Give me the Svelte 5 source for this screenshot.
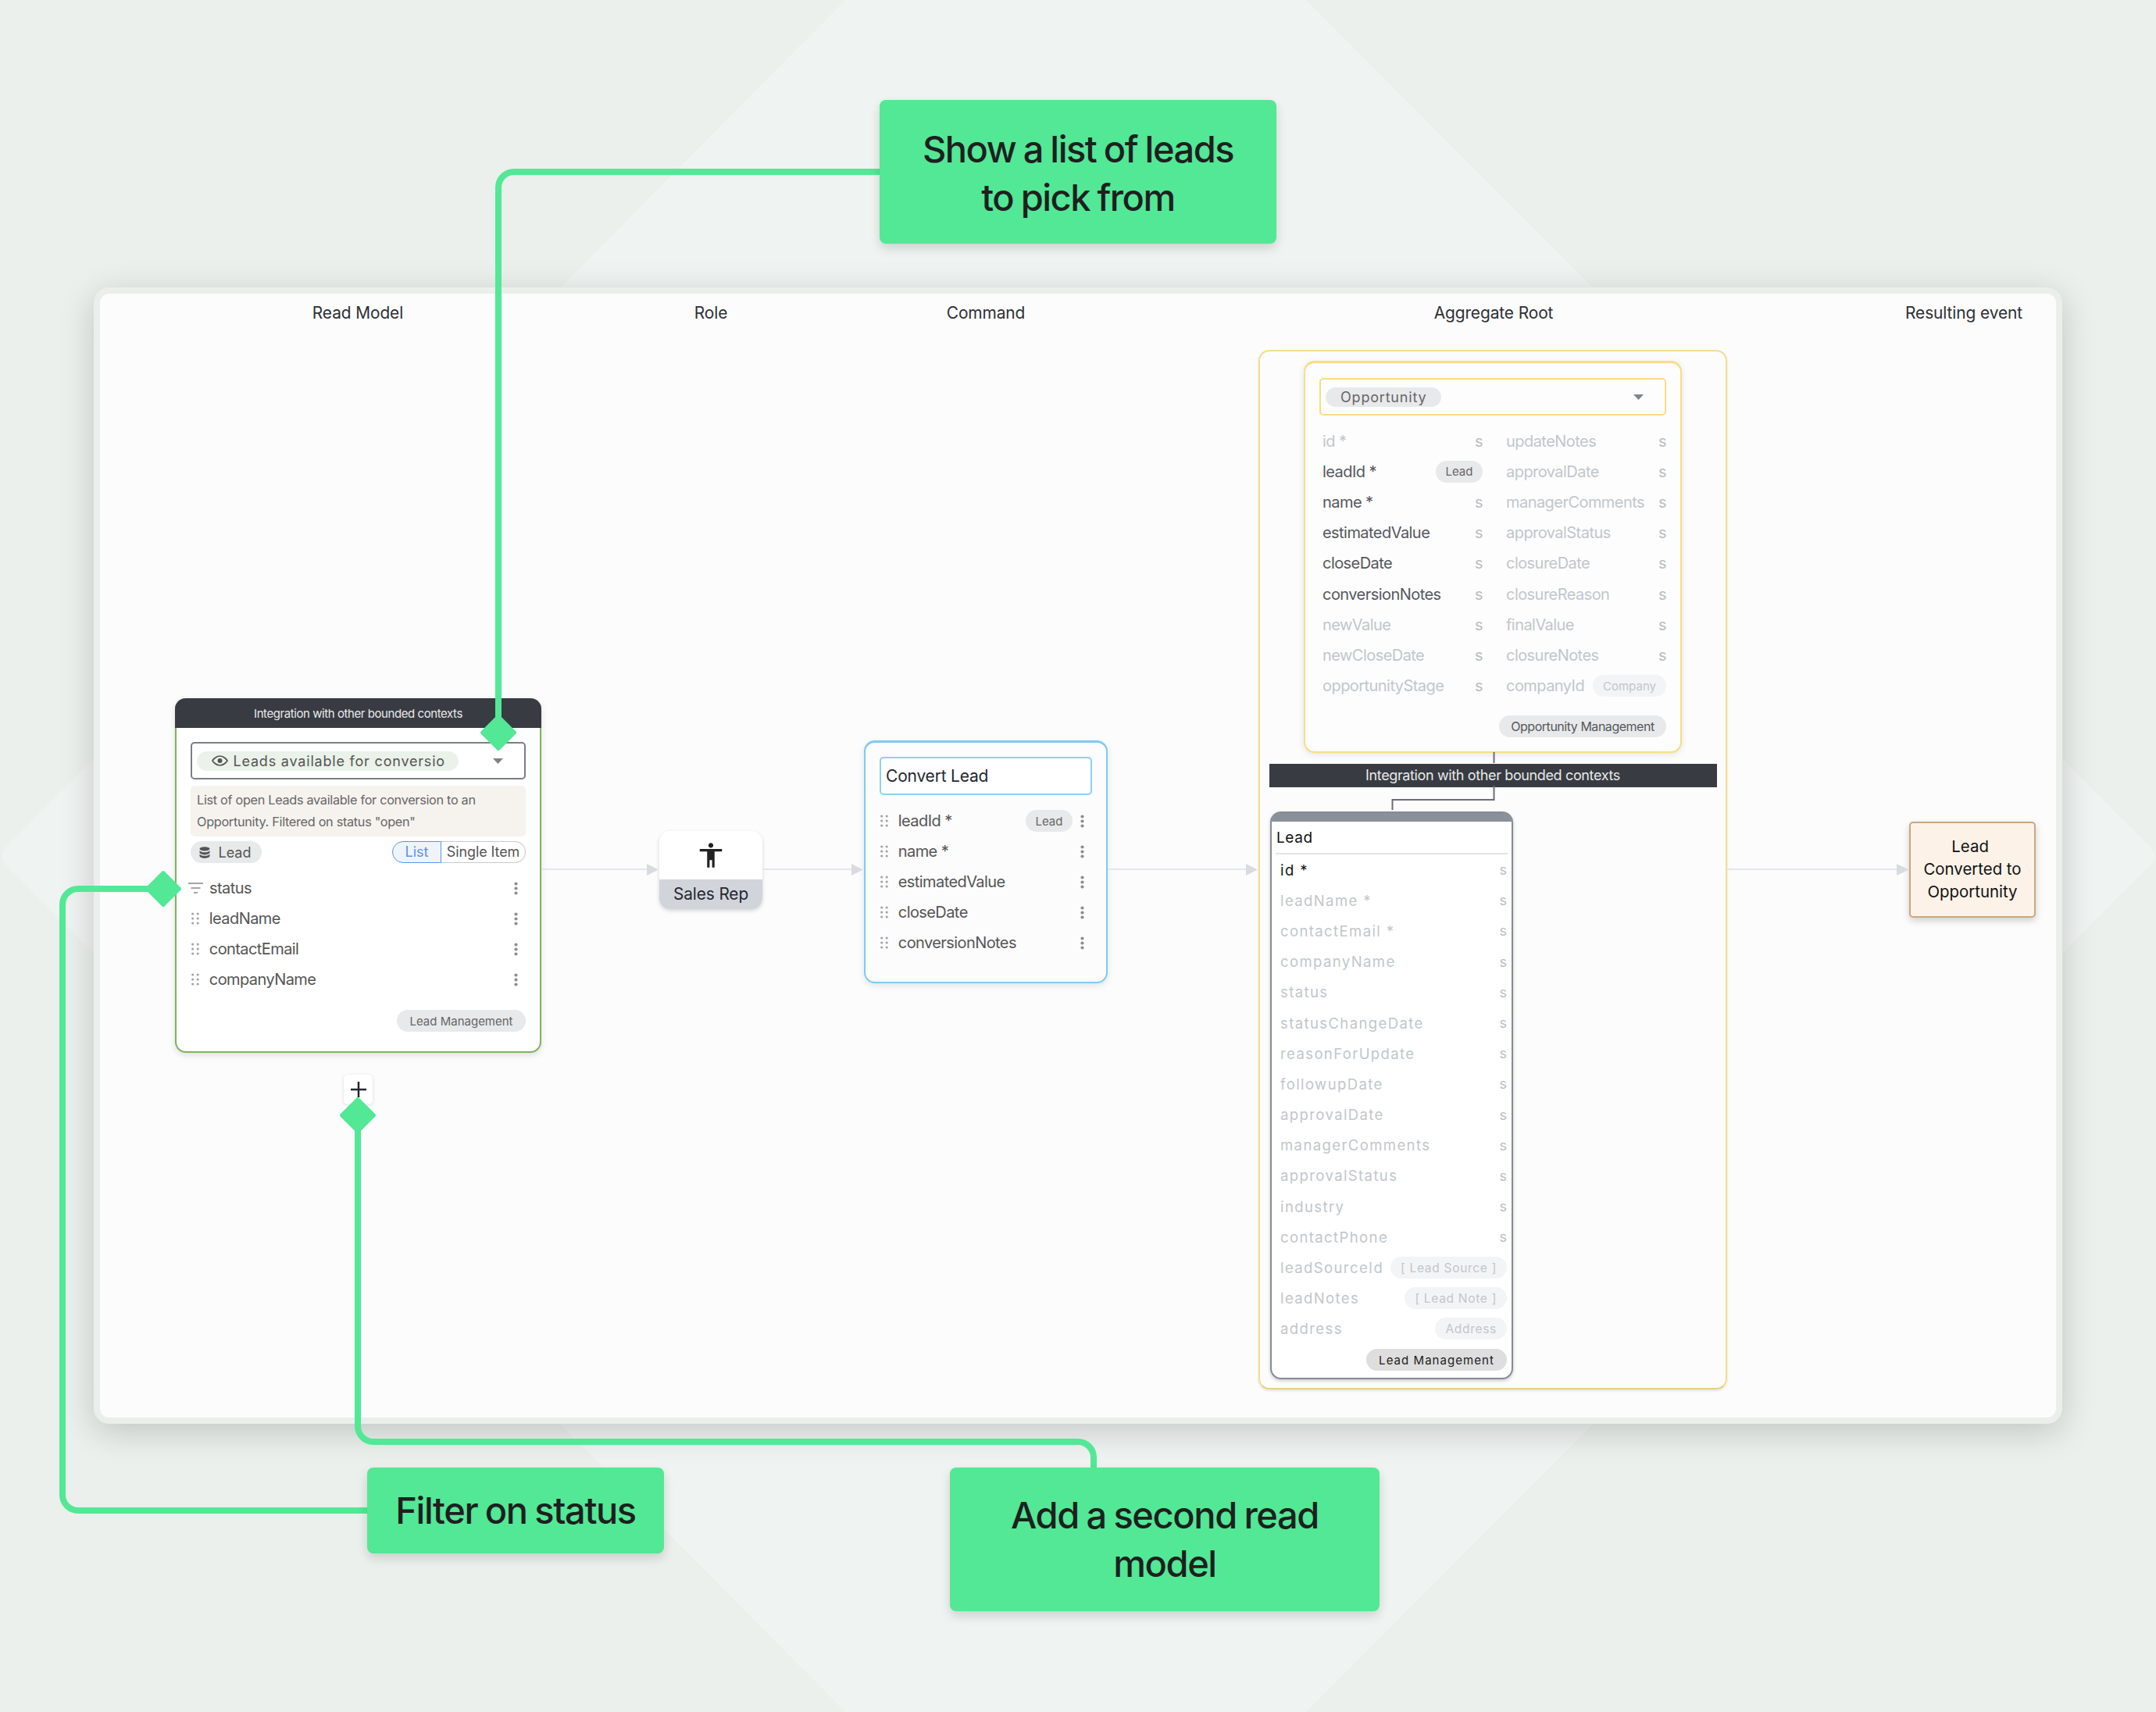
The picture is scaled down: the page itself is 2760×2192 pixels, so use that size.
<script>
  const readFields = ['leadName', 'contactEmail', 'companyName'];
  const commandFields = [
    { name: 'leadId *', chip: 'Lead' },
    { name: 'name *' },
    { name: 'estimatedValue' },
    { name: 'closeDate' },
    { name: 'conversionNotes' }
  ];
  const opportunityFields = [
    { name: 'id *' },
    { name: 'updateNotes' },
    { name: 'leadId *', on: true, chip: 'Lead' },
    { name: 'approvalDate' },
    { name: 'name *', on: true },
    { name: 'managerComments' },
    { name: 'estimatedValue', on: true },
    { name: 'approvalStatus' },
    { name: 'closeDate', on: true },
    { name: 'closureDate' },
    { name: 'conversionNotes', on: true },
    { name: 'closureReason' },
    { name: 'newValue' },
    { name: 'finalValue' },
    { name: 'newCloseDate' },
    { name: 'closureNotes' },
    { name: 'opportunityStage' },
    { name: 'companyId', chip: 'Company', faint: true }
  ];
  const leadFields = [
    { name: 'id *', on: true },
    { name: 'leadName *' },
    { name: 'contactEmail *' },
    { name: 'companyName' },
    { name: 'status' },
    { name: 'statusChangeDate' },
    { name: 'reasonForUpdate' },
    { name: 'followupDate' },
    { name: 'approvalDate' },
    { name: 'managerComments' },
    { name: 'approvalStatus' },
    { name: 'industry' },
    { name: 'contactPhone' },
    { name: 'leadSourceId', chip: '[ Lead Source ]' },
    { name: 'leadNotes', chip: '[ Lead Note ]' },
    { name: 'address', chip: 'Address' }
  ];
</script>

{#snippet grip()}
  <svg class="grip" width="10" height="16" viewBox="0 0 10 16">
    {#each [2, 8, 14] as y}
      <circle cx="1.7" cy={y} r="1.6" />
      <circle cx="8.2" cy={y} r="1.6" />
    {/each}
  </svg>
{/snippet}

{#snippet kebab()}
  <svg class="kebab" width="5" height="17" viewBox="0 0 5 17">
    {#each [2.5, 8.5, 14.5] as y}
      <circle cx="2.5" cy={y} r="2.1" />
    {/each}
  </svg>
{/snippet}

{#snippet caret()}
  <svg class="caret" width="13" height="7" viewBox="0 0 13 7"><path d="M0 0h13L6.5 7z" /></svg>
{/snippet}

<main class="page">
  <svg class="backdrop" width="2760" height="2192" viewBox="0 0 2760 2192">
    <path d="M1082 0H1672L2752 1084Q2764 1096 2752 1108L1672 2192H1082L8 1108Q-4 1096 8 1084Z" />
  </svg>

  <section class="panel">
    <span class="label label-read">Read Model</span>
    <span class="label label-role">Role</span>
    <span class="label label-command">Command</span>
    <span class="label label-aggregate">Aggregate Root</span>
    <span class="label label-event">Resulting event</span>

    <article class="node read">
      <header class="read-head">Integration with other bounded contexts</header>
      <div class="read-body">
        <div class="select select-read">
          <span class="view-chip">
            <svg width="21" height="14" viewBox="0 0 21 14" fill="none">
              <path d="M1 7s3.6-6 9.5-6S20 7 20 7s-3.6 6-9.5 6S1 7 1 7z" stroke="#555" stroke-width="1.7" />
              <circle cx="10.5" cy="7" r="3" fill="#555" />
            </svg>
            Leads available for conversio
          </span>
          {@render caret()}
        </div>
        <p class="desc">List of open Leads available for conversion to an Opportunity. Filtered on status "open"</p>
        <div class="mode-row">
          <span class="chip chip-source">
            <svg width="14" height="15" viewBox="0 0 14 15" fill="#555">
              <ellipse cx="7" cy="2.8" rx="6.5" ry="2.6" />
              <path d="M.5 5c1 1.6 3.6 2.3 6.5 2.3S12.500 6.600 13.500 5v2.600C13.500 9.200 10.600 10.400 7 10.400S.5 9.200.5 7.600z" />
              <path d="M.5 9.500c1 1.600 3.600 2.300 6.500 2.300s5.500-.7 6.500-2.300v2.600C13.500 13.700 10.600 14.900 7 14.900S.5 13.700.5 12.100z" />
            </svg>
            Lead
          </span>
          <div class="toggle">
            <span class="toggle-on">List</span>
            <span class="toggle-off">Single Item</span>
          </div>
        </div>
        <ul class="rows read-rows">
          <li class="row">
            <svg class="filter" width="19" height="14" viewBox="0 0 19 14" fill="none" stroke="#888" stroke-width="1.6">
              <path d="M0 1h19M3.500 7h12M7 13h5" />
            </svg>
            <span class="row-name">status</span>
            {@render kebab()}
          </li>
          {#each readFields as field}
            <li class="row">
              {@render grip()}
              <span class="row-name">{field}</span>
              {@render kebab()}
            </li>
          {/each}
        </ul>
        <div class="foot"><span class="chip chip-foot">Lead Management</span></div>
      </div>
    </article>

    <article class="node role">
      <div class="role-icon">
        <svg width="38" height="38" viewBox="0 0 24 24" fill="#222">
          <path d="M12 2c1.100 0 2 .9 2 2s-.9 2-2 2-2-.9-2-2 .9-2 2-2zm9 7h-6v13h-2v-6h-2v6H9V9H3V7h18v2z" />
        </svg>
      </div>
      <div class="role-name">Sales Rep</div>
    </article>

    <article class="node command">
      <div class="command-input">Convert Lead</div>
      <ul class="rows">
        {#each commandFields as field}
          <li class="row">
            {@render grip()}
            <span class="row-name">{field.name}</span>
            {#if field.chip}<span class="chip chip-ref">{field.chip}</span>{/if}
            {@render kebab()}
          </li>
        {/each}
      </ul>
    </article>

    <article class="node aggregate">
      <div class="opportunity">
        <div class="select select-opportunity">
          <span class="entity-chip">Opportunity</span>
          {@render caret()}
        </div>
        <ul class="opportunity-grid">
          {#each opportunityFields as field}
            <li class="attr" class:attr-on={field.on}>
              <span>{field.name}</span>
              {#if field.chip}
                <span class="chip chip-attr" class:chip-faint={field.faint}>{field.chip}</span>
              {:else}
                <span class="attr-type">s</span>
              {/if}
            </li>
          {/each}
        </ul>
        <div class="foot foot-opportunity"><span class="chip chip-opportunity">Opportunity Management</span></div>
      </div>

      <div class="context-bar">Integration with other bounded contexts</div>

      <div class="lead">
        <div class="lead-band"></div>
        <div class="lead-title">Lead</div>
        <ul class="lead-rows">
          {#each leadFields as field}
            <li class="lead-row" class:lead-on={field.on}>
              <span>{field.name}</span>
              {#if field.chip}
                <span class="chip chip-lead">{field.chip}</span>
              {:else}
                <span class="attr-type">s</span>
              {/if}
            </li>
          {/each}
        </ul>
        <div class="lead-foot"><span class="chip chip-lead-foot">Lead Management</span></div>
      </div>
    </article>

    <article class="node event">Lead&nbsp; Converted to Opportunity</article>

    <button class="node add" aria-label="Add">
      <svg width="20" height="20" viewBox="0 0 20 20" stroke="#23272f" stroke-width="2.500"><path d="M10 0v20M0 10h20" /></svg>
    </button>

    <svg class="wires" width="2504" height="1439" viewBox="128 376 2504 1439" fill="none">
      <g stroke="#e4e6ea" stroke-width="2">
        <path d="M693 1113H830M976 1113H1092M1418 1113H1597M2211 1113H2430" />
      </g>
      <g fill="#d8dbe1">
        <path d="M828 1106l15 7.500-15 7.500zM1090 1106l15 7.500-15 7.500zM1595 1106l15 7.500-15 7.500zM2428 1106l16 7.500-16 7.500z" />
      </g>
      <path d="M1912.500 963V977M1912.500 1006V1024H1782.500V1037" stroke="#6b6e75" stroke-width="2" />
    </svg>
  </section>

  <svg class="guides" width="2760" height="2192" viewBox="0 0 2760 2192" fill="none">
    <g stroke="#52e896" stroke-width="8">
      <path d="M1126 220H658A20 20 0 0 0 638 240V938" />
      <path d="M209 1138H100A20 20 0 0 0 80 1158V1914A20 20 0 0 0 100 1934H470" />
      <path d="M458 1428V1826A20 20 0 0 0 478 1846H1380A20 20 0 0 1 1400 1866V1879" />
    </g>
    <g fill="#52e896" stroke="#52e896" stroke-width="4" stroke-linejoin="round">
      <path d="M638 917L659 938L638 959L617 938Z" />
      <path d="M209 1117L230 1138L209 1159L188 1138Z" />
      <path d="M458 1407L479 1428L458 1449L437 1428Z" />
    </g>
  </svg>

  <div class="callout callout-list">Show a list of leads<br />to pick from</div>
  <div class="callout callout-filter">Filter on status</div>
  <div class="callout callout-second">Add a second read<br />model</div>
</main>

<style>
  :global(body) {
    margin: 0;
    background: #ebf0ec;
  }
  * {
    box-sizing: border-box;
  }
  ul {
    list-style: none;
    margin: 0;
    padding: 0;
  }
  .page {
    position: relative;
    width: 2760px;
    height: 2192px;
    overflow: hidden;
    background: #ebf0ec;
    font-family: Inter, "Liberation Sans", sans-serif;
    color: #333;
  }
  .backdrop {
    position: absolute;
    left: 0;
    top: 0;
  }
  .backdrop path {
    fill: #eff3f1;
  }

  .panel {
    position: absolute;
    left: 120px;
    top: 368px;
    width: 2520px;
    height: 1455px;
    background: #fcfcfc;
    border: 8px solid #eaefeb;
    border-radius: 20px;
    box-shadow: 0 10px 44px rgba(0, 0, 0, 0.18);
  }
  .label {
    position: absolute;
    top: 13px;
    width: 300px;
    margin-left: -150px;
    text-align: center;
    font-size: 20.900px;
    line-height: 24px;
    letter-spacing: -0.1px;
    color: #2e3035;
  }
  .label-read { left: 330px; }
  .label-role { left: 782px; }
  .label-command { left: 1134px; }
  .label-aggregate { left: 1784px; }
  .label-event { left: 2386px; }

  .node {
    position: absolute;
  }
  .wires {
    position: absolute;
    left: 0;
    top: 0;
    pointer-events: none;
  }

  .grip { fill: #a0a3a8; flex: none; margin: 0 12.4px 0 1.4px; }
  .kebab { fill: #8b8e93; flex: none; margin: 0 10px 0 6px; }
  .caret { fill: #808388; flex: none; }

  .chip {
    display: inline-flex;
    align-items: center;
    border-radius: 14px;
    background: #e8e9ea;
    white-space: nowrap;
  }

  .read {
    left: 96px;
    top: 518px;
    width: 469px;
    height: 454px;
    display: flex;
    flex-direction: column;
    background: #fff;
    border-radius: 14px;
    border: 2px solid #7fb35e;
    border-top: 0;
    box-shadow: 0 3px 8px rgba(0, 0, 0, 0.12);
  }
  .read-head {
    height: 38px;
    margin: 0 -2px;
    border-radius: 14px 14px 0 0;
    background: #383b42;
    color: #e8e9ea;
    text-align: center;
    font-size: 15px;
    line-height: 40px;
    letter-spacing: -0.43px;
  }
  .read-body {
    padding: 18px 18px 0;
    display: flex;
    flex-direction: column;
  }
  .select {
    display: flex;
    align-items: center;
    justify-content: space-between;
    border-radius: 5px;
  }
  .select-read {
    height: 48px;
    padding: 0 27px 0 6px;
    border: 2px solid #7b7e85;
  }
  .view-chip {
    display: flex;
    align-items: center;
    gap: 6.500px;
    width: 335px;
    height: 25px;
    padding-left: 19px;
    border-radius: 13px;
    background: #eaf2e9;
    color: #555;
    font-size: 18px;
    letter-spacing: 0.8px;
    white-space: nowrap;
  }
  .desc {
    height: 65px;
    margin: 8px 0 0;
    padding: 4px 8px;
    border-radius: 5px;
    background: #f6f3ef;
    color: #666;
    font-size: 16.300px;
    line-height: 28px;
    letter-spacing: -0.32px;
  }
  .mode-row {
    display: flex;
    justify-content: space-between;
    align-items: center;
    margin-top: 6px;
    font-size: 18px;
  }
  .chip-source {
    gap: 10.500px;
    width: 91px;
    height: 28px;
    padding-left: 11px;
    color: #555;
  }
  .toggle {
    display: flex;
    height: 28px;
    line-height: 25px;
  }
  .toggle-on {
    width: 63px;
    text-align: center;
    border: 1.500px solid #5a93ec;
    border-radius: 14px 0 0 14px;
    background: #eff3fc;
    color: #5a93ec;
  }
  .toggle-off {
    width: 108px;
    text-align: center;
    border: 1.500px solid #c9cacc;
    border-left: 0;
    border-radius: 0 14px 14px 0;
    color: #555;
    letter-spacing: -0.1px;
  }
  .rows {
    display: flex;
    flex-direction: column;
  }
  .read-rows {
    margin-top: 12.500px;
  }
  .row {
    display: flex;
    align-items: center;
    height: 39px;
    font-size: 20px;
    color: #555;
    letter-spacing: -0.58px;
  }
  .row-name {
    flex: 1;
  }
  .filter {
    flex: none;
    margin: 0 8px 0 -3px;
  }
  .foot {
    display: flex;
    justify-content: flex-end;
    margin-top: 19.500px;
  }
  .chip-foot {
    justify-content: center;
    width: 165px;
    height: 28px;
    color: #666;
    font-size: 15px;
    letter-spacing: 0;
  }

  .role {
    left: 716px;
    top: 688px;
    width: 132px;
    height: 100px;
    display: flex;
    flex-direction: column;
    border-radius: 14px;
    overflow: hidden;
    background: #fff;
    box-shadow: 0 2px 5px rgba(0, 0, 0, 0.16);
  }
  .role-icon {
    height: 62px;
    display: flex;
    justify-content: center;
    padding-top: 12px;
  }
  .role-name {
    flex: 1;
    background: #d1d4db;
    color: #23272f;
    font-size: 20.800px;
    line-height: 37px;
    text-align: center;
    letter-spacing: -0.1px;
  }

  .command {
    left: 978px;
    top: 572px;
    width: 312px;
    height: 311px;
    padding: 18px 18px 0;
    background: #fcfcfc;
    border: 2px solid #7dcbf2;
    border-top-width: 3px;
    border-radius: 14px;
    box-shadow: 0 3px 8px rgba(0, 0, 0, 0.1);
  }
  .command-input {
    height: 49px;
    margin-bottom: 13.500px;
    padding-left: 6px;
    border: 2px solid #8dd0f3;
    border-radius: 5px;
    background: #fff;
    color: #23272f;
    font-size: 21px;
    line-height: 45px;
    letter-spacing: -0.2px;
  }
  .chip-ref {
    justify-content: center;
    width: 60px;
    height: 28px;
    font-size: 15px;
    color: #666;
    letter-spacing: 0;
  }
  .command .kebab {
    margin-left: 10px;
  }

  .aggregate {
    left: 1483px;
    top: 72px;
    width: 600px;
    height: 1331px;
    display: flex;
    flex-direction: column;
    align-items: center;
    padding-top: 12px;
    border: 2px solid #f5dc8e;
    border-bottom-color: #e8cf85;
    border-radius: 14px;
    box-shadow: 0 2px 3px rgba(0, 0, 0, 0.1);
  }
  .opportunity {
    width: 484px;
    height: 502px;
    padding: 19px 18px 0;
    border: 2px solid #f9dd82;
    border-top-width: 3px;
    border-radius: 14px;
    background: #fdfdfd;
    box-shadow: 0 2px 8px rgba(0, 0, 0, 0.1);
  }
  .select-opportunity {
    height: 48px;
    padding: 0 27px 0 6px;
    border: 2px solid #f9dd82;
  }
  .entity-chip {
    width: 148px;
    height: 25px;
    padding-left: 19px;
    line-height: 25px;
    border-radius: 13px;
    background: #e8e9ea;
    color: #666;
    font-size: 18px;
    letter-spacing: 0.8px;
  }
  .opportunity-grid {
    display: grid;
    grid-template-columns: 205px 205px;
    grid-auto-rows: 39.200px;
    column-gap: 30px;
    margin-top: 13px;
    padding-left: 4px;
  }
  .attr {
    display: flex;
    align-items: center;
    justify-content: space-between;
    font-size: 20px;
    letter-spacing: -0.55px;
    color: #c2c6cc;
    white-space: nowrap;
  }
  .attr-on {
    color: #55585e;
  }
  .attr-type {
    color: #b9bdc4;
    font-size: 20px;
  }
  .chip-attr {
    justify-content: center;
    width: 60px;
    height: 28px;
    font-size: 15px;
    color: #666;
    letter-spacing: 0;
  }
  .chip-faint {
    width: 94px;
    background: #f3f4f5;
    color: #c2c6cc;
  }
  .foot-opportunity {
    margin-top: 18px;
  }
  .chip-opportunity {
    justify-content: center;
    width: 214px;
    height: 28px;
    color: #55585e;
    font-size: 16px;
    letter-spacing: -0.47px;
  }
  .context-bar {
    width: 573px;
    height: 30px;
    margin: 13.500px 0 31px;
    background: #383b42;
    color: #e8e9ea;
    font-size: 18px;
    line-height: 30px;
    text-align: center;
    letter-spacing: -0.37px;
  }
  .lead {
    align-self: flex-start;
    width: 311px;
    height: 727px;
    margin-left: 13px;
    background: #fff;
    border: 2px solid #868c96;
    border-radius: 14px;
    box-shadow: 0 2px 4px rgba(0, 0, 0, 0.2);
    display: flex;
    flex-direction: column;
  }
  .lead-band {
    height: 11px;
    background: #8a909a;
    border-radius: 11px 11px 0 0;
  }
  .lead-title {
    height: 42.500px;
    margin: 0 5px;
    border-bottom: 2.500px solid #e3e3e3;
    padding-left: 1px;
    color: #111;
    font-size: 19px;
    line-height: 41px;
    letter-spacing: 0.6px;
  }
  .lead-rows {
    display: flex;
    flex-direction: column;
  }
  .lead-row {
    height: 39.200px;
    display: flex;
    align-items: center;
    justify-content: space-between;
    padding: 0 6px 0 11px;
    font-size: 18.500px;
    letter-spacing: 1.400px;
    color: #c2c6cc;
    white-space: nowrap;
  }
  .lead-on {
    color: #111;
  }
  .lead-row .attr-type {
    font-size: 18px;
    letter-spacing: 0;
  }
  .chip-lead {
    height: 28px;
    padding: 0 13px;
    background: #f3f4f5;
    color: #c2c6cc;
    font-size: 15.500px;
    letter-spacing: 0.700px;
  }
  .lead-foot {
    display: flex;
    justify-content: flex-end;
    margin-top: 6px;
    padding-right: 6px;
  }
  .chip-lead-foot {
    justify-content: center;
    width: 180px;
    height: 28px;
    background: #dedede;
    color: #1c1c1c;
    font-size: 15px;
    letter-spacing: 1.050px;
  }

  .event {
    left: 2316px;
    top: 676px;
    width: 162px;
    height: 123px;
    display: flex;
    align-items: center;
    justify-content: center;
    padding: 0 10px;
    background: #fdf2e8;
    border: 2px solid #c9a77f;
    border-radius: 5px;
    box-shadow: 0 4px 10px rgba(0, 0, 0, 0.18);
    color: #111;
    font-size: 20.400px;
    line-height: 28.700px;
    text-align: center;
  }

  .add {
    left: 312px;
    top: 1000px;
    width: 37px;
    height: 38px;
    padding: 0;
    display: flex;
    align-items: center;
    justify-content: center;
    background: #fff;
    border: 0;
    border-radius: 5px;
    box-shadow: 0 1px 4px rgba(0, 0, 0, 0.14);
  }

  .guides {
    position: absolute;
    left: 0;
    top: 0;
    pointer-events: none;
  }
  .callout {
    position: absolute;
    display: flex;
    align-items: center;
    justify-content: center;
    background: #52e896;
    border-radius: 8px;
    box-shadow: 0 6px 14px rgba(0, 0, 0, 0.14);
    color: #1f1f1f;
    font-size: 47px;
    font-weight: 500;
    line-height: 62px;
    letter-spacing: -1.400px;
    word-spacing: -1.500px;
    text-align: center;
  }
  .callout-list {
    left: 1126px;
    top: 128px;
    width: 508px;
    height: 184px;
    padding-top: 3px;
    letter-spacing: -1.500px;
  }
  .callout-filter {
    left: 470px;
    top: 1879px;
    width: 380px;
    height: 110px;
  }
  .callout-second {
    left: 1216px;
    top: 1879px;
    width: 550px;
    height: 184px;
  }
</style>
